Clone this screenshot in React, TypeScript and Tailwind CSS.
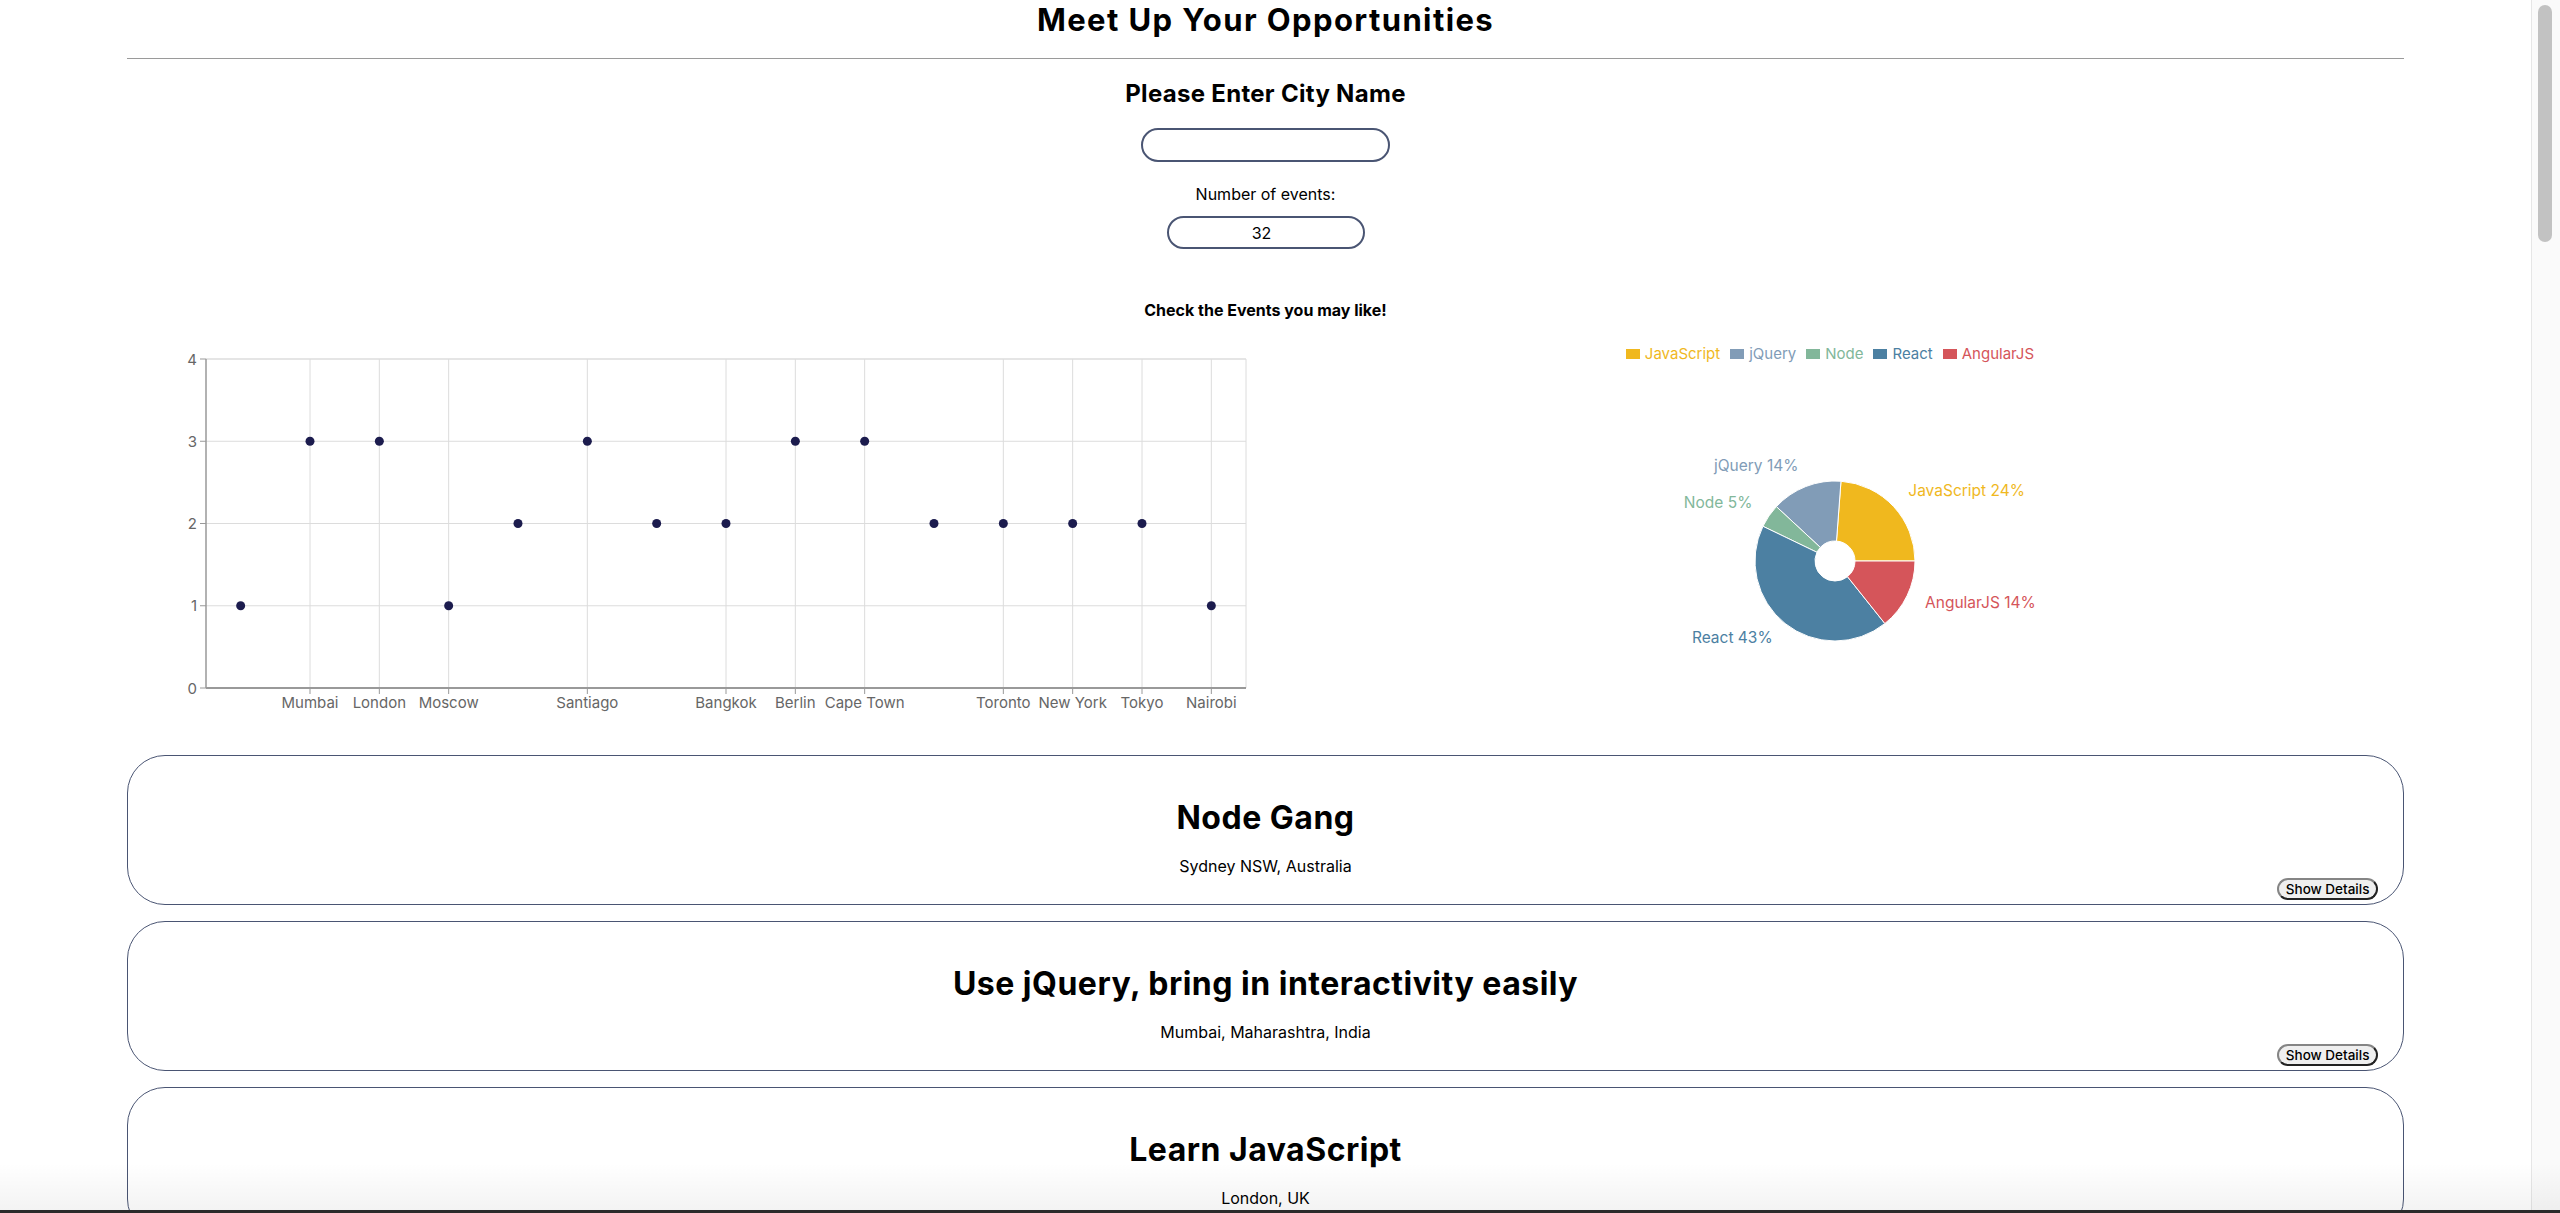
import { useState } from 'react';

type CityPoint = { city: string; count: number; showTick: boolean };
type Genre = { name: string; value: number; color: string };

const cityData: CityPoint[] = [
  { city: 'Sydney', count: 1, showTick: false },
  { city: 'Mumbai', count: 3, showTick: true },
  { city: 'London', count: 3, showTick: true },
  { city: 'Moscow', count: 1, showTick: true },
  { city: 'Munich', count: 2, showTick: false },
  { city: 'Santiago', count: 3, showTick: true },
  { city: 'Dubai', count: 2, showTick: false },
  { city: 'Bangkok', count: 2, showTick: true },
  { city: 'Berlin', count: 3, showTick: true },
  { city: 'Cape Town', count: 3, showTick: true },
  { city: 'Melbourne', count: 2, showTick: false },
  { city: 'Toronto', count: 2, showTick: true },
  { city: 'New York', count: 2, showTick: true },
  { city: 'Tokyo', count: 2, showTick: true },
  { city: 'Nairobi', count: 1, showTick: true },
];

const genreData: Genre[] = [
  { name: 'JavaScript', value: 5, color: '#f0b81e' },
  { name: 'jQuery', value: 3, color: '#819cb7' },
  { name: 'Node', value: 1, color: '#82b79a' },
  { name: 'React', value: 9, color: '#4c80a2' },
  { name: 'AngularJS', value: 3, color: '#d5555a' },
];

const events = [
  { id: 1, summary: 'Node Gang', location: 'Sydney NSW, Australia' },
  { id: 2, summary: 'Use jQuery, bring in interactivity easily', location: 'Mumbai, Maharashtra, India' },
  { id: 3, summary: 'Learn JavaScript', location: 'London, UK' },
];

// plot area of the scatter chart, in svg units
const PL = 79;
const PR = 1119;
const PT = 20;
const PB = 349;

const ScatterChart = () => {
  const band = (PR - PL) / cityData.length;
  const xOf = (i: number) => PL + band / 2 + i * band;
  const yOf = (v: number) => PB - (v * (PB - PT)) / 4;

  return (
    <svg width={1138} height={400} viewBox="0 0 1138 400" className="block">
      {[1, 2, 3, 4].map((v) => (
        <line key={v} x1={PL} x2={PR} y1={yOf(v)} y2={yOf(v)} stroke="#dcdcdc" strokeWidth={v === 4 ? 1.5 : 1} />
      ))}
      {cityData.map((d, i) =>
        d.showTick ? (
          <line key={d.city} x1={xOf(i)} x2={xOf(i)} y1={PT} y2={PB} stroke="#dcdcdc" />
        ) : null
      )}
      <line x1={PR} x2={PR} y1={PT} y2={PB} stroke="#dcdcdc" />

      {/* y axis */}
      <line x1={PL} x2={PL} y1={PT} y2={PB} stroke="#999" strokeWidth={1.5} />
      {[0, 1, 2, 3, 4].map((v) => (
        <g key={v}>
          <line x1={PL - 6} x2={PL} y1={yOf(v)} y2={yOf(v)} stroke="#999" />
          <text x={PL - 9} y={yOf(v)} textAnchor="end" dominantBaseline="central" fill="#666" fontSize={15}>
            {v}
          </text>
        </g>
      ))}

      {/* x axis */}
      <line x1={PL} x2={PR} y1={PB} y2={PB} stroke="#999" strokeWidth={2} />
      {cityData.map((d, i) =>
        d.showTick ? (
          <g key={d.city}>
            <line x1={xOf(i)} x2={xOf(i)} y1={PB} y2={PB + 6} stroke="#999" />
            <text x={xOf(i)} y={PB + 14} textAnchor="middle" dominantBaseline="central" fill="#666" fontSize={15}>
              {d.city}
            </text>
          </g>
        ) : null
      )}

      {cityData.map((d, i) => (
        <circle key={d.city} cx={xOf(i)} cy={yOf(d.count)} r={4.5} fill="#1c1c4e" />
      ))}
    </svg>
  );
};

const polar = (cx: number, cy: number, r: number, deg: number) => {
  const a = (deg * Math.PI) / 180;
  return [cx + r * Math.cos(a), cy - r * Math.sin(a)];
};

const slicePath = (cx: number, cy: number, r0: number, r1: number, a0: number, a1: number) => {
  const large = a1 - a0 > 180 ? 1 : 0;
  const [ox0, oy0] = polar(cx, cy, r1, a0);
  const [ox1, oy1] = polar(cx, cy, r1, a1);
  const [ix1, iy1] = polar(cx, cy, r0, a1);
  const [ix0, iy0] = polar(cx, cy, r0, a0);
  return `M${ox0},${oy0} A${r1},${r1} 0 ${large} 0 ${ox1},${oy1} L${ix1},${iy1} A${r0},${r0} 0 ${large} 1 ${ix0},${iy0} Z`;
};

const GenrePie = () => {
  const total = genreData.reduce((s, g) => s + g.value, 0);
  const cx = 569;
  const cy = 197;
  let start = 0;

  const slices = genreData.map((g) => {
    const sweep = (g.value / total) * 360;
    const a0 = start;
    const a1 = start + sweep;
    start = a1;
    const mid = (a0 + a1) / 2;
    const [lx, ly] = polar(cx, cy, 100, mid);
    return { ...g, a0, a1, lx, ly, right: Math.cos((mid * Math.PI) / 180) >= 0, pct: Math.round((g.value / total) * 100) };
  });

  return (
    <div className="flex flex-col items-center">
      <ul className="mt-[5px] flex h-[20px] items-center justify-center">
        {genreData.map((g) => (
          <li key={g.name} className="mr-[10px] flex items-center text-[15px] leading-[20px]" style={{ color: g.color }}>
            <span className="mr-[5px] inline-block h-[10.5px] w-[14px]" style={{ backgroundColor: g.color }} />
            {g.name}
          </li>
        ))}
      </ul>
      <svg width={1138} height={375} viewBox="0 0 1138 375" className="block">
        {slices.map((s) => (
          <path key={s.name} d={slicePath(cx, cy, 20, 80, s.a0, s.a1)} fill={s.color} stroke="#fff" strokeWidth={1} />
        ))}
        {slices.map((s) => (
          <text
            key={s.name}
            x={s.lx}
            y={s.ly - 2}
            fill={s.color}
            fontSize={15.5}
            textAnchor={s.right ? 'start' : 'end'}
            dominantBaseline="central"
          >
            {`${s.name} ${s.pct}%`}
          </text>
        ))}
      </svg>
    </div>
  );
};

const EventCard = ({ summary, location }: { summary: string; location: string }) => (
  <div className="flex h-[150px] shrink-0 flex-col rounded-[38px] border border-[#4a5573] pt-[42px] text-center">
    <h3 className="text-[32px] font-bold leading-[40px] tracking-[0.5px]">{summary}</h3>
    <p className="mt-[18px] text-[16px] leading-[20px]">{location}</p>
    <div className="mt-[2px] flex justify-end pr-[25px]">
      <button className="h-[22px] rounded-full border-2 border-t-[#858585] border-l-[#858585] border-r-[#222] border-b-[#222] bg-[#efefef] px-[7px] text-[13.5px] font-medium leading-[16px]">
        Show Details
      </button>
    </div>
  </div>
);

export default function App() {
  const [city, setCity] = useState('');
  const [numEvents, setNumEvents] = useState('32');

  return (
    <div className="relative flex h-screen overflow-hidden bg-white text-black" style={{ fontFamily: 'Inter, "Noto Sans", sans-serif' }}>
      <main className="min-w-0 flex-1 overflow-hidden">
        <h1 className="text-center text-[31px] font-bold leading-[40px] tracking-[1.4px]">Meet Up Your Opportunities</h1>
        <hr className="mx-auto mt-[18px] w-[90%] border-0 border-t border-[#9a9a9a]" />

        <div className="flex flex-col items-center">
          <h2 className="mt-[19px] text-[24px] font-bold leading-[32px] tracking-[0.3px]">Please Enter City Name</h2>
          <input
            value={city}
            onChange={(e) => setCity(e.target.value)}
            className="mt-[18px] h-[34px] w-[249px] rounded-full border-2 border-[#4a5573] px-4 text-[16px] outline-none"
          />
          <label className="mt-[22px] text-[16px] leading-[20px]">Number of events:</label>
          <input
            value={numEvents}
            onChange={(e) => setNumEvents(e.target.value)}
            className="mt-[12px] h-[33px] w-[198px] rounded-full border-2 border-[#4a5573] pr-[8px] text-center text-[16px] outline-none"
          />
          <h4 className="mt-[51px] text-[16px] font-bold leading-[20px]">Check the Events you may like!</h4>
        </div>

        <div className="mx-auto mt-[19px] flex h-[400px] w-[90%]">
          <div className="w-1/2">
            <ScatterChart />
          </div>
          <div className="w-1/2">
            <GenrePie />
          </div>
        </div>

        <div className="mx-auto mt-[16px] flex w-[90%] flex-col gap-4">
          {events.map((ev) => (
            <EventCard key={ev.id} summary={ev.summary} location={ev.location} />
          ))}
        </div>
      </main>

      <aside className="w-[29px] shrink-0 border-l border-[#e6e6e6] bg-[#fafafa]">
        <div className="ml-[6px] mt-[5px] h-[237px] w-[14px] rounded-full bg-[#c2c2c2]" />
      </aside>

      <div className="pointer-events-none absolute inset-x-0 bottom-0 h-[50px] bg-gradient-to-b from-transparent to-black/5" />
      <div className="pointer-events-none absolute inset-x-0 bottom-0 h-[3px] bg-[#2a2a2a]" />
    </div>
  );
}
